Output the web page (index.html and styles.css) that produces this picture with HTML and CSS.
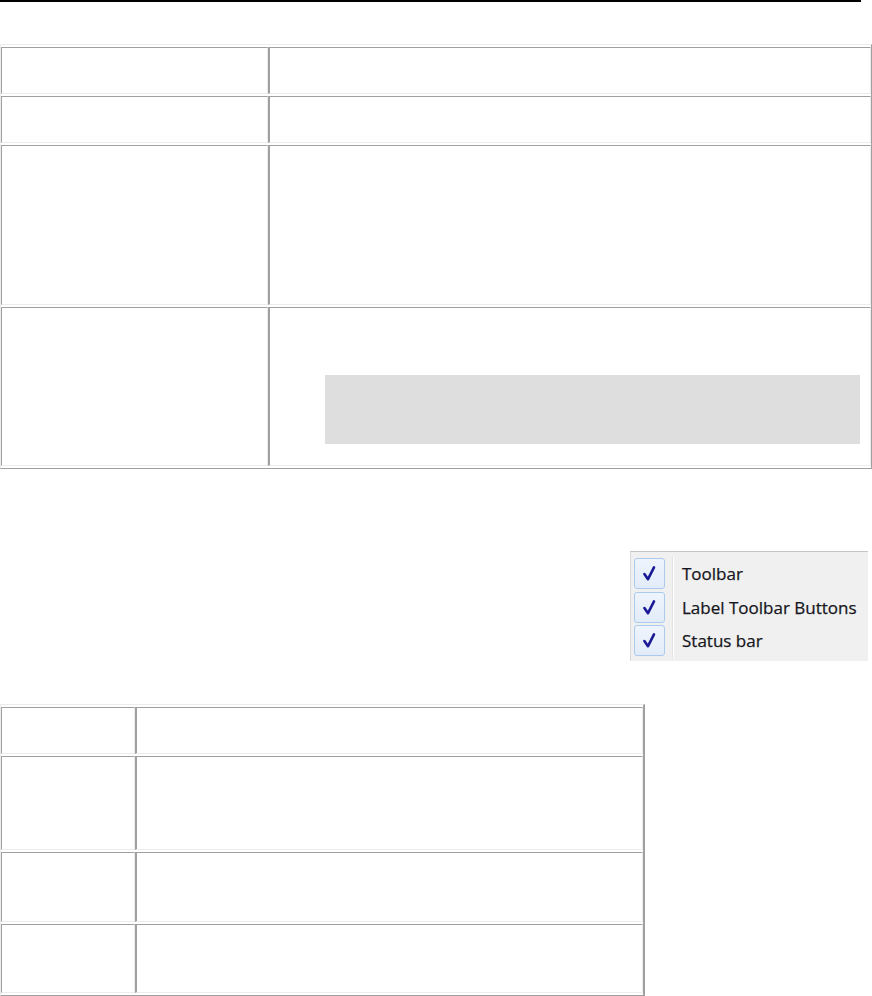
FILE: index.html
```html
<!DOCTYPE html>
<html>
<head>
<meta charset="utf-8">
<link rel="stylesheet" href="styles.css">
</head>
<body>
<div class="rule"></div>

<table class="grid grid-main">
  <tr class="r47"><td class="c1"></td><td class="c2"></td></tr>
  <tr class="r47"><td class="c1"></td><td class="c2"></td></tr>
  <tr class="r160"><td class="c1"></td><td class="c2"></td></tr>
  <tr class="r159"><td class="c1"></td><td class="c2"><div class="codebox"></div></td></tr>
</table>

<div class="menu-row">
  <div class="menu">
    <div class="menu-item">
      <span class="check"><svg width="29" height="29" viewBox="0 0 29 29"><path d="M9.4 15 L13 20.2 L19 8.4" fill="none" stroke="#1a1a96" stroke-width="2.6" stroke-linecap="round" stroke-linejoin="round"/></svg></span>
      <span class="sep"></span>
      <span class="label">Toolbar</span>
    </div>
    <div class="menu-item">
      <span class="check"><svg width="29" height="29" viewBox="0 0 29 29"><path d="M9.4 15 L13 20.2 L19 8.4" fill="none" stroke="#1a1a96" stroke-width="2.6" stroke-linecap="round" stroke-linejoin="round"/></svg></span>
      <span class="sep"></span>
      <span class="label">Label Toolbar Buttons</span>
    </div>
    <div class="menu-item">
      <span class="check"><svg width="29" height="29" viewBox="0 0 29 29"><path d="M9.4 15 L13 20.2 L19 8.4" fill="none" stroke="#1a1a96" stroke-width="2.6" stroke-linecap="round" stroke-linejoin="round"/></svg></span>
      <span class="sep"></span>
      <span class="label">Status bar</span>
    </div>
  </div>
</div>

<table class="grid grid-small">
  <tr class="r47"><td class="c1"></td><td class="c2"></td></tr>
  <tr class="r94"><td class="c1"></td><td class="c2"></td></tr>
  <tr class="r70"><td class="c1"></td><td class="c2"></td></tr>
  <tr class="r69"><td class="c1"></td><td class="c2"></td></tr>
</table>
</body>
</html>
```

FILE: styles.css
```css
html, body {
  margin: 0;
  padding: 0;
  background: #ffffff;
  font-family: "Open Sans", "Noto Sans", "Liberation Sans", sans-serif;
}

.rule {
  width: 861px;
  height: 2px;
  background: #000000;
}

.grid {
  border-collapse: separate;
  border-spacing: 0 2px;
  border: 1px solid;
  border-color: #ececec #a0a0a0 #a0a0a0 #ececec;
  table-layout: fixed;
}

.grid td {
  border: 1px solid;
  border-color: #a0a0a0 #ececec #ececec #a0a0a0;
  padding: 0;
  vertical-align: top;
}

.grid td.c2 {
  border-left-width: 2px;
}

.grid-main {
  width: 872px;
  margin-top: 42px;
}

.grid-main td.c1 {
  width: 265px;
}

.grid-small {
  width: 645px;
  margin-top: 43px;
  border-right-width: 2px;
  border-bottom-width: 2px;
}

.grid-small td.c1 {
  width: 132px;
}

.r47 { height: 47px; }
.r160 { height: 160px; }
.r159 { height: 159px; }
.r94 { height: 94px; }
.r70 { height: 70px; }
.r69 { height: 69px; }

.codebox {
  height: 69px;
  margin: 67px 10px 0 55px;
  background: #dedede;
}

.menu-row {
  display: flex;
  justify-content: flex-end;
  margin-top: 82px;
  padding-right: 4px;
}

.menu {
  width: 238px;
  height: 110px;
  background: #f0f0f0;
  border-top: 1px solid #c4c4c4;
  border-left: 1px solid #d8d8d8;
  padding-top: 5px;
  box-sizing: border-box;
}

.menu-item {
  display: flex;
  align-items: center;
  height: 33.5px;
}

.check {
  display: flex;
  align-items: center;
  justify-content: center;
  width: 29px;
  height: 29px;
  margin-left: 3px;
  border: 1px solid #aacbee;
  border-radius: 3px;
  background: linear-gradient(#eef4fc, #e2ecf9);
}

.sep {
  align-self: stretch;
  width: 1px;
  margin-left: 7px;
  background: #e3e3e3;
  box-shadow: 1px 0 0 #ffffff;
}

.label {
  margin-left: 9px;
  font-size: 17px;
  color: #161620;
  white-space: nowrap;
  letter-spacing: 0;
  -webkit-text-stroke: 0.25px #161620;
}
```
